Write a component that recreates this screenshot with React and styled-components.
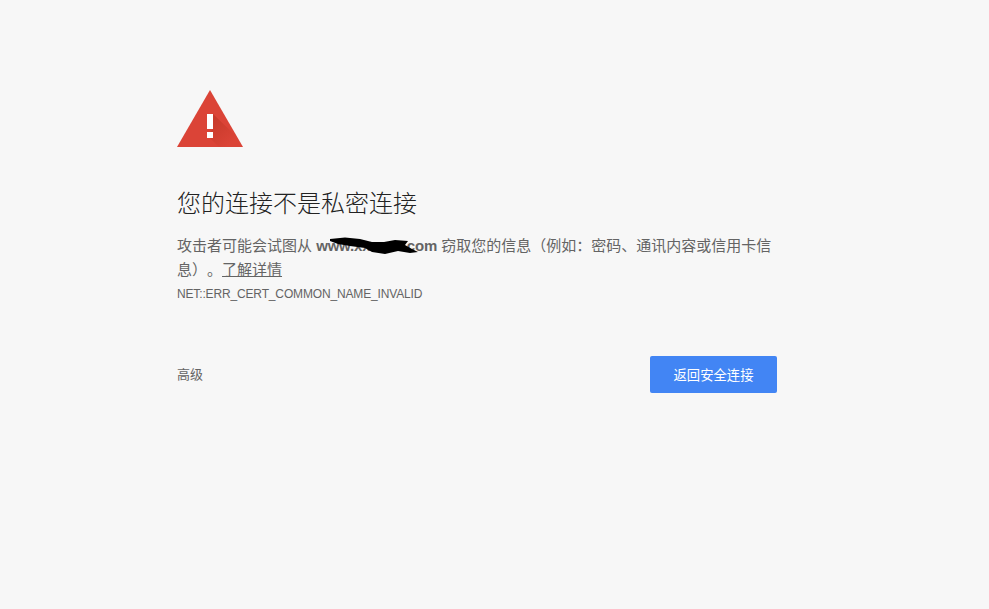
import React from "react";
import styled, { createGlobalStyle } from "styled-components";

const Global = createGlobalStyle`
  html, body { margin: 0; height: 100%; background: #f7f7f7; }
  #root { height: 100%; }
`;

const Page = styled.div`
  box-sizing: border-box;
  width: 777px;
  height: 609px;
  padding: 90px 0 0 177px;
  overflow: hidden;
  font-family: "Liberation Sans", "Noto Sans CJK SC", sans-serif;
  color: #646464;
  text-spacing-trim: space-all;
`;

const Interstitial = styled.div`
  width: 600px;
`;

const WarnIcon = styled.svg`
  display: block;
  width: 66px;
  height: 57px;
`;

const Heading = styled.h1`
  margin: 41px 0 0;
  font-size: 24px;
  line-height: 32px;
  font-weight: 300;
  color: #222;
`;

const Message = styled.p`
  margin: 14px 0 0;
  font-size: 15px;
  line-height: 24px;
`;

const Host = styled.strong`
  position: relative;
  font-weight: 700;
  letter-spacing: -0.2px;
`;

const Scribble = styled.svg`
  position: absolute;
  left: 14px;
  top: -1px;
  width: 90px;
  height: 20px;
`;

const LearnMore = styled.a`
  color: #646464;
  text-decoration: underline;
`;

const ErrorCode = styled.div`
  margin-top: 4px;
  font-size: 12px;
  line-height: 16px;
  letter-spacing: -0.15px;
  color: #646464;
`;

const Actions = styled.div`
  display: flex;
  align-items: center;
  justify-content: space-between;
  margin-top: 54px;
`;

const Advanced = styled.span`
  margin-bottom: 2px;
  font-size: 13px;
  color: #646464;
`;

const Primary = styled.button`
  width: 127px;
  height: 37px;
  padding: 0;
  border: 0;
  border-radius: 2px;
  background: #4285f4;
  color: #fff;
  font: 13.33px "Liberation Sans", "Noto Sans CJK SC", sans-serif;
`;

export default function App() {
  return (
    <Page>
      <Global />
      <Interstitial>
        <WarnIcon viewBox="0 0 66 57">
          <defs>
            <linearGradient id="warnShade" x1="0.1" y1="0.1" x2="0.75" y2="0.8">
              <stop offset="0" stopColor="#a52714" stopOpacity="0.4" />
              <stop offset="1" stopColor="#a52714" stopOpacity="0" />
            </linearGradient>
          </defs>
          <path d="M33 0 L66 57 L0 57 Z" fill="#db4437" />
          <path d="M36 24 L60.5 47.5 L66 57 L42 57 L30 45 L36 39 Z" fill="url(#warnShade)" />
          <rect x="30" y="24" width="6" height="15" fill="#fff" />
          <rect x="30" y="42" width="6" height="6" fill="#fff" />
        </WarnIcon>
        <Heading>您的连接不是私密连接</Heading>
        <Message>
          攻击者可能会试图从{" "}
          <Host>
            www.xxxxxx.com
            <Scribble viewBox="0 0 90 20">
              <path d="M0 3 L15 1.5 L30 3 L42 6 L54 6 L65 4 L78 5 L75 9 L82 13 L88 16 L80 17 L68 15 L55 18 L42 16 L35 12 L20 10 L8 8 L0 5 Z" fill="#000" />
            </Scribble>
          </Host>{" "}
          窃取您的信息（例如：密码、通讯内容或信用卡信息）。<LearnMore>了解详情</LearnMore>
        </Message>
        <ErrorCode>NET::ERR_CERT_COMMON_NAME_INVALID</ErrorCode>
        <Actions>
          <Advanced>高级</Advanced>
          <Primary>返回安全连接</Primary>
        </Actions>
      </Interstitial>
    </Page>
  );
}
